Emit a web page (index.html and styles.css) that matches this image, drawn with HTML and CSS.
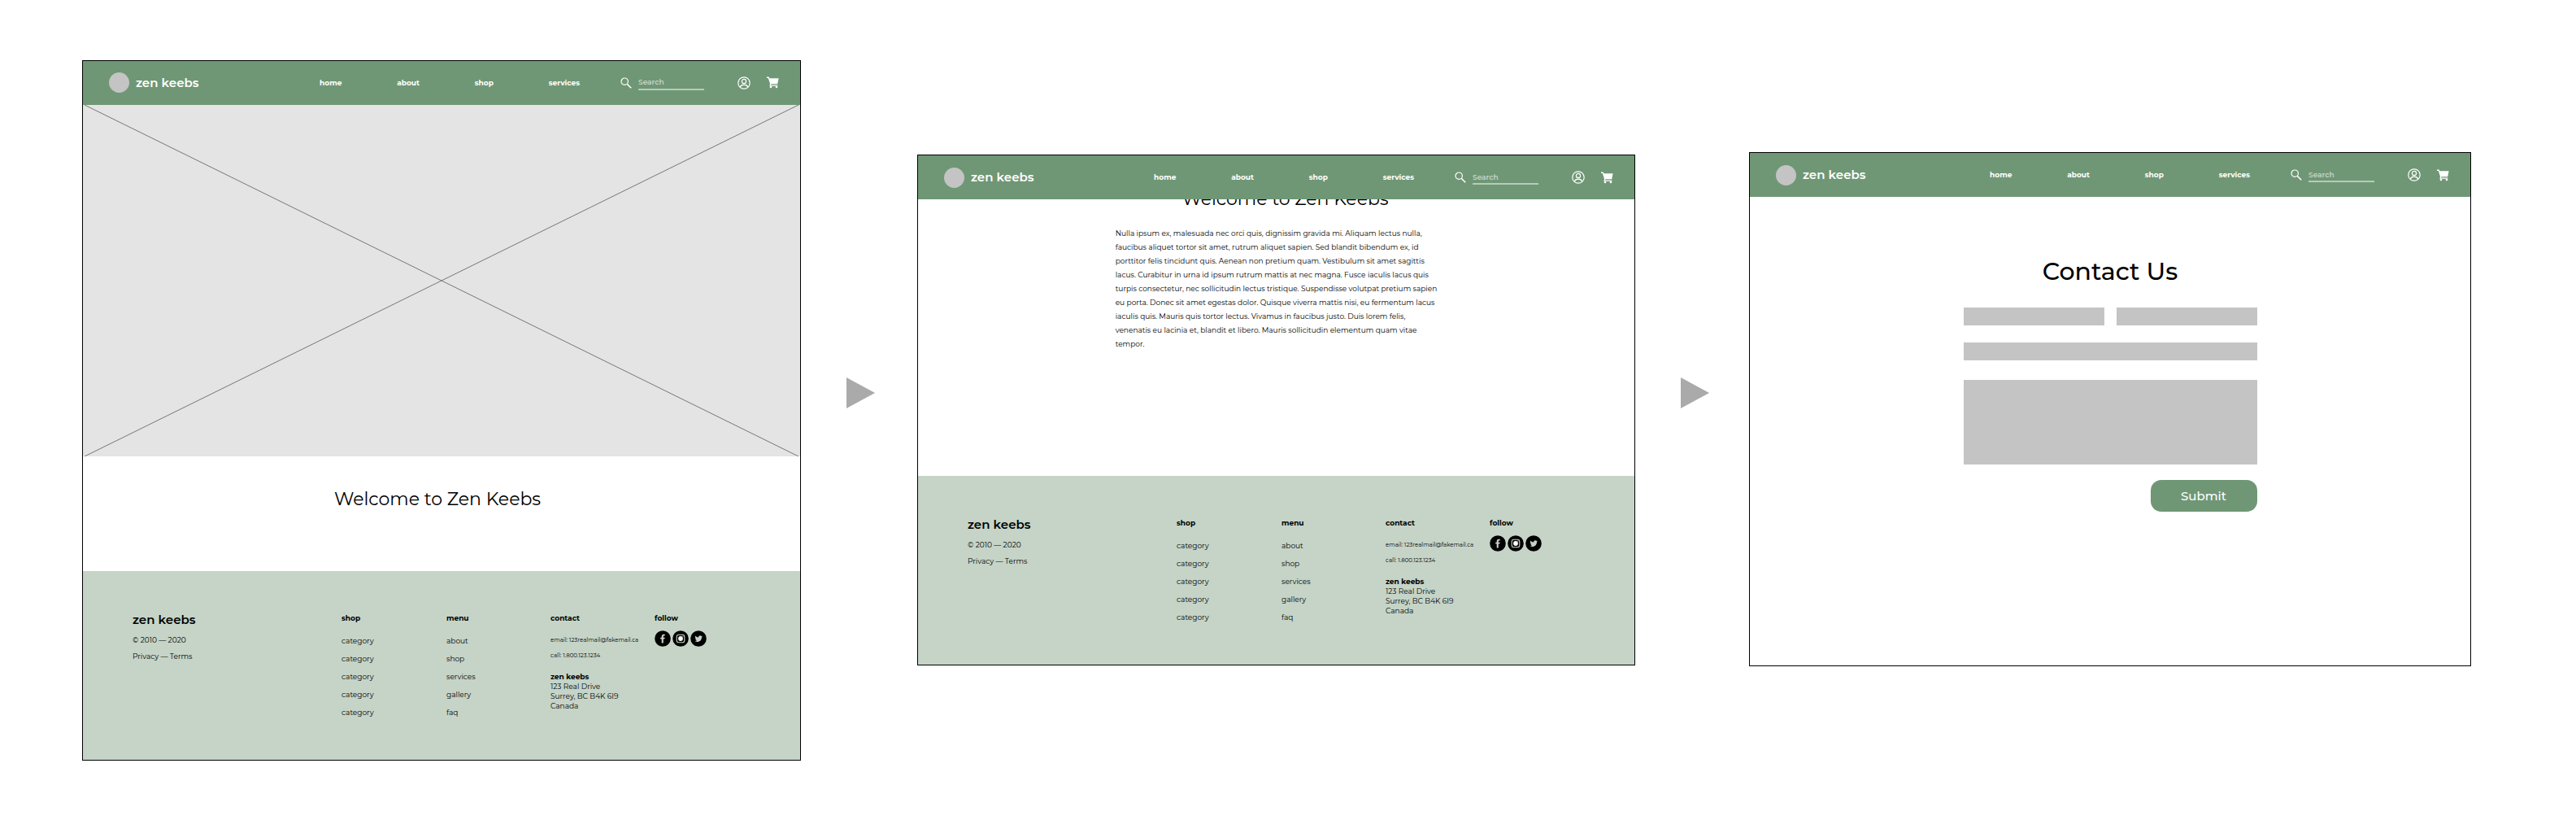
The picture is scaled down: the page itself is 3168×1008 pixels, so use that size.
FILE: index.html
```html
<!DOCTYPE html>
<html lang="en">
<head>
<meta charset="utf-8">
<title>zen keebs</title>
<link rel="stylesheet" href="styles.css">
</head>
<body>
<svg class="sprite" aria-hidden="true">
  <symbol id="i-search" viewBox="0 0 14 14"><g fill="none" stroke="#fff" stroke-width="1.2"><circle cx="5.2" cy="5.2" r="4.2"/><path d="M8.2 8.2l5 5" stroke-width="1.6"/></g></symbol>
  <symbol id="i-user" viewBox="0 0 16 16"><g fill="none" stroke="#fff" stroke-width="1.2"><circle cx="8" cy="8" r="7.2"/><circle cx="8" cy="6" r="2.6"/><path d="M3.2 13c.9-2 2.700-2.900 4.800-2.900s3.900.9 4.800 2.900"/></g></symbol>
  <symbol id="i-cart" viewBox="0 0 15 15"><path fill="#fff" d="M0 .6h2.600l.8 1.600H14.600L13.200 9.200H5.400l-.5 1.200h8.400v1.300H3.400L4 8.900 1.800 1.900H0z"/><circle cx="5" cy="13" r="1.300" fill="#fff"/><circle cx="12" cy="13" r="1.300" fill="#fff"/></symbol>
  <symbol id="i-facebook" viewBox="0 0 20 20"><circle cx="10" cy="10" r="9.800"/><path fill="#c5d4c7" d="M8.700 15.600v-5H7.200V8.700h1.500V7.300c0-1.600.9-2.600 2.500-2.600h1.500v1.900h-1c-.7 0-.9.300-.9.900v1.200h1.900l-.3 1.900h-1.600v5z"/></symbol>
  <symbol id="i-instagram" viewBox="0 0 20 20"><circle cx="10" cy="10" r="9.800"/><rect x="5.200" y="5.200" width="9.600" height="9.600" rx="2.600" fill="none" stroke="#c5d4c7" stroke-width="1.100"/><circle cx="10" cy="10" r="2.900" fill="#fff"/><circle cx="12.900" cy="7.100" r=".6" fill="#c5d4c7"/></symbol>
  <symbol id="i-twitter" viewBox="0 0 20 20"><circle cx="10" cy="10" r="9.800"/><path fill="#c5d4c7" d="M14.900 7.100c-.4.200-.7.300-1.100.3.400-.2.700-.6.800-1-.4.200-.8.400-1.200.5a1.950 1.950 0 0 0-3.300 1.700c-1.600-.1-3-.8-4-2-.5.900-.2 2 .6 2.600-.3 0-.6-.1-.9-.2 0 .9.700 1.700 1.600 1.900-.3.100-.6.100-.9 0 .2.800 1 1.300 1.800 1.300-.8.600-1.800.9-2.900.8 4.200 2.500 8.700-.2 8.600-4.800.4-.3.700-.7.900-1.100z"/></symbol>
</svg>

<main class="flow">
  <article class="screen">
    <header class="bar">
      <a class="brand" href="#"><span class="dot"></span>zen keebs</a>
      <nav class="links"><a href="#">home</a><a href="#">about</a><a href="#">shop</a><a href="#">services</a></nav>
      <label class="search"><svg class="glass"><use href="#i-search"/></svg><input type="search" placeholder="Search" aria-label="Search"></label>
      <a class="account" href="#" aria-label="Account"><svg><use href="#i-user"/></svg></a>
      <a class="cart" href="#" aria-label="Cart"><svg><use href="#i-cart"/></svg></a>
    </header>
    <svg class="hero" viewBox="0 0 882 432" preserveAspectRatio="none" role="img" aria-label="Hero image"><path d="M2 0L880 432M880 0L2 432"/></svg>
    <section class="welcome"><h1>Welcome to Zen Keebs</h1></section>
    <footer class="foot">
      <div class="legal">
        <h2>zen keebs</h2>
        <p>© 2010 — 2020</p>
        <p><a href="#">Privacy</a> — <a href="#">Terms</a></p>
      </div>
      <div class="list"><h3>shop</h3><a href="#">category</a><a href="#">category</a><a href="#">category</a><a href="#">category</a><a href="#">category</a></div>
      <div class="list"><h3>menu</h3><a href="#">about</a><a href="#">shop</a><a href="#">services</a><a href="#">gallery</a><a href="#">faq</a></div>
      <div class="contact"><h3>contact</h3><p>email: 123realmail@fakemail.ca</p><p>call: 1.800.123.1234</p><address><b>zen keebs</b><br>123 Real Drive<br>Surrey, BC B4K 6I9<br>Canada</address></div>
      <div class="follow"><h3>follow</h3><div class="social"><a href="#" aria-label="Facebook"><svg><use href="#i-facebook"/></svg></a><a href="#" aria-label="Instagram"><svg><use href="#i-instagram"/></svg></a><a href="#" aria-label="Twitter"><svg><use href="#i-twitter"/></svg></a></div></div>
    </footer>
  </article>

  <svg class="next" viewBox="0 0 35 38" aria-hidden="true"><path d="M0 0L35 19L0 38z"/></svg>

  <article class="screen">
    <header class="bar">
      <a class="brand" href="#"><span class="dot"></span>zen keebs</a>
      <nav class="links"><a href="#">home</a><a href="#">about</a><a href="#">shop</a><a href="#">services</a></nav>
      <label class="search"><svg class="glass"><use href="#i-search"/></svg><input type="search" placeholder="Search" aria-label="Search"></label>
      <a class="account" href="#" aria-label="Account"><svg><use href="#i-user"/></svg></a>
      <a class="cart" href="#" aria-label="Cart"><svg><use href="#i-cart"/></svg></a>
    </header>
    <section class="about">
      <h1>Welcome to Zen Keebs</h1>
      <p>Nulla ipsum ex, malesuada nec orci quis, dignissim gravida mi. Aliquam lectus nulla,<br>
      faucibus aliquet tortor sit amet, rutrum aliquet sapien. Sed blandit bibendum ex, id<br>
      porttitor felis tincidunt quis. Aenean non pretium quam. Vestibulum sit amet sagittis<br>
      lacus. Curabitur in urna id ipsum rutrum mattis at nec magna. Fusce iaculis lacus quis<br>
      turpis consectetur, nec sollicitudin lectus tristique. Suspendisse volutpat pretium sapien<br>
      eu porta. Donec sit amet egestas dolor. Quisque viverra mattis nisi, eu fermentum lacus<br>
      iaculis quis. Mauris quis tortor lectus. Vivamus in faucibus justo. Duis lorem felis,<br>
      venenatis eu lacinia et, blandit et libero. Mauris sollicitudin elementum quam vitae<br>
      tempor.</p>
    </section>
    <footer class="foot">
      <div class="legal">
        <h2>zen keebs</h2>
        <p>© 2010 — 2020</p>
        <p><a href="#">Privacy</a> — <a href="#">Terms</a></p>
      </div>
      <div class="list"><h3>shop</h3><a href="#">category</a><a href="#">category</a><a href="#">category</a><a href="#">category</a><a href="#">category</a></div>
      <div class="list"><h3>menu</h3><a href="#">about</a><a href="#">shop</a><a href="#">services</a><a href="#">gallery</a><a href="#">faq</a></div>
      <div class="contact"><h3>contact</h3><p>email: 123realmail@fakemail.ca</p><p>call: 1.800.123.1234</p><address><b>zen keebs</b><br>123 Real Drive<br>Surrey, BC B4K 6I9<br>Canada</address></div>
      <div class="follow"><h3>follow</h3><div class="social"><a href="#" aria-label="Facebook"><svg><use href="#i-facebook"/></svg></a><a href="#" aria-label="Instagram"><svg><use href="#i-instagram"/></svg></a><a href="#" aria-label="Twitter"><svg><use href="#i-twitter"/></svg></a></div></div>
    </footer>
  </article>

  <svg class="next" viewBox="0 0 35 38" aria-hidden="true"><path d="M0 0L35 19L0 38z"/></svg>

  <article class="screen">
    <header class="bar">
      <a class="brand" href="#"><span class="dot"></span>zen keebs</a>
      <nav class="links"><a href="#">home</a><a href="#">about</a><a href="#">shop</a><a href="#">services</a></nav>
      <label class="search"><svg class="glass"><use href="#i-search"/></svg><input type="search" placeholder="Search" aria-label="Search"></label>
      <a class="account" href="#" aria-label="Account"><svg><use href="#i-user"/></svg></a>
      <a class="cart" href="#" aria-label="Cart"><svg><use href="#i-cart"/></svg></a>
    </header>
    <form class="form">
      <h1>Contact Us</h1>
      <div class="names"><input type="text" aria-label="First name"><input type="text" aria-label="Last name"></div>
      <input type="email" aria-label="Email">
      <textarea aria-label="Message"></textarea>
      <button type="submit">Submit</button>
    </form>
  </article>
</main>
</body>
</html>
```
FILE: styles.css
```css
* { box-sizing: border-box; margin: 0; }
body {
  background: #fff;
  color: #000;
  font-family: Montserrat, Inter, sans-serif;
  font-size: 9px;
  line-height: 12px;
}
a { color: inherit; text-decoration: none; }
svg { display: block; }
.sprite { position: absolute; width: 0; height: 0; }

.flow {
  display: grid;
  grid-template-columns: 884fr 143px 883fr 140px 888fr;
  align-items: center;
  min-height: 100vh;
  padding: 0 129px 0 101px;
}
.screen { border: 1px solid #000; background: #fff; }
.screen:last-child { margin-bottom: 2px; }
.next { width: 35px; height: 38px; margin: -42px 0 0 56px; fill: #aaa; }

/* top bar */
.bar {
  display: flex;
  align-items: center;
  height: 54px;
  padding: 0 26px 0 32px;
  background: #6f9775;
  color: #fff;
}
.brand {
  display: flex;
  flex: 1;
  align-items: center;
  gap: 8px;
  font-size: 15px;
  font-weight: 600;
  line-height: 20px;
}
.dot { width: 25px; height: 25px; border-radius: 50%; background: #c4c4c4; }
.links { display: flex; justify-content: space-between; width: 320px; margin-right: 50px; font-weight: 700; }
.search { display: flex; align-items: center; gap: 8px; margin-right: 41px; }
.glass { width: 14px; height: 14px; }
.search input {
  width: 81px;
  height: 18px;
  padding: 0;
  border: 0;
  border-bottom: 2px solid #b7cbba;
  border-radius: 0;
  outline: 0;
  appearance: none;
  background: none;
  color: #fff;
  font: 600 9px/12px Montserrat, Inter, sans-serif;
}
.search input::placeholder { color: #c5d4c7; opacity: 1; }
.account { margin-right: 20px; }
.account svg { width: 16px; height: 16px; }
.cart svg { width: 15px; height: 15px; }

/* home */
.hero { width: 100%; height: 432px; background: #e4e4e4; }
.hero path { fill: none; stroke: #777; }
h1 { font-size: 22px; font-weight: 400; line-height: 30px; text-align: center; }
.welcome { height: 141px; padding: 38px 10px 0 0; }

/* about, scrolled partly under the bar */
.about { height: 340px; overflow: hidden; }
.about h1 { margin-top: -15px; padding-left: 22px; }
.about p { width: fit-content; margin: 18px auto 0; line-height: 17px; }

/* footer */
.foot {
  display: grid;
  grid-template-columns: 257px 129px 128px 128px auto;
  min-height: 232px;
  padding: 50px 0 0 61px;
  background: #c5d4c7;
}
h2 { margin-bottom: 9px; font-size: 15px; font-weight: 600; line-height: 20px; }
h3 { margin-bottom: 9px; font-size: 9px; font-weight: 700; line-height: 16px; }
.legal p { margin-bottom: 8px; }
.list a { display: block; line-height: 22px; }
.contact h3 { margin-bottom: 13px; }
.contact p { margin-bottom: 7px; font-size: 7px; }
.contact address { margin-top: 14px; font-style: normal; }
.follow h3 { margin-bottom: 7px; }
.social { display: flex; gap: 2px; }
.social svg { width: 20px; height: 20px; }

/* contact form */
.form { width: 361px; min-height: 576px; margin: 0 auto; padding-top: 72px; }
.form h1 { margin-bottom: 24px; font-size: 30px; font-weight: 500; line-height: 40px; }
.form input, .form textarea {
  display: block;
  width: 100%;
  height: 22px;
  padding: 0 8px;
  border: 0;
  background: #c4c4c4;
}
.form textarea { height: 104px; margin: 24px 0 19px; resize: none; }
.names { display: flex; gap: 15px; margin-bottom: 21px; }
.form button {
  display: block;
  width: 131px;
  height: 39px;
  margin-left: auto;
  border: 0;
  border-radius: 13px;
  background: #6f9775;
  color: #fff;
  font: 500 15px/20px Montserrat, Inter, sans-serif;
}
```
